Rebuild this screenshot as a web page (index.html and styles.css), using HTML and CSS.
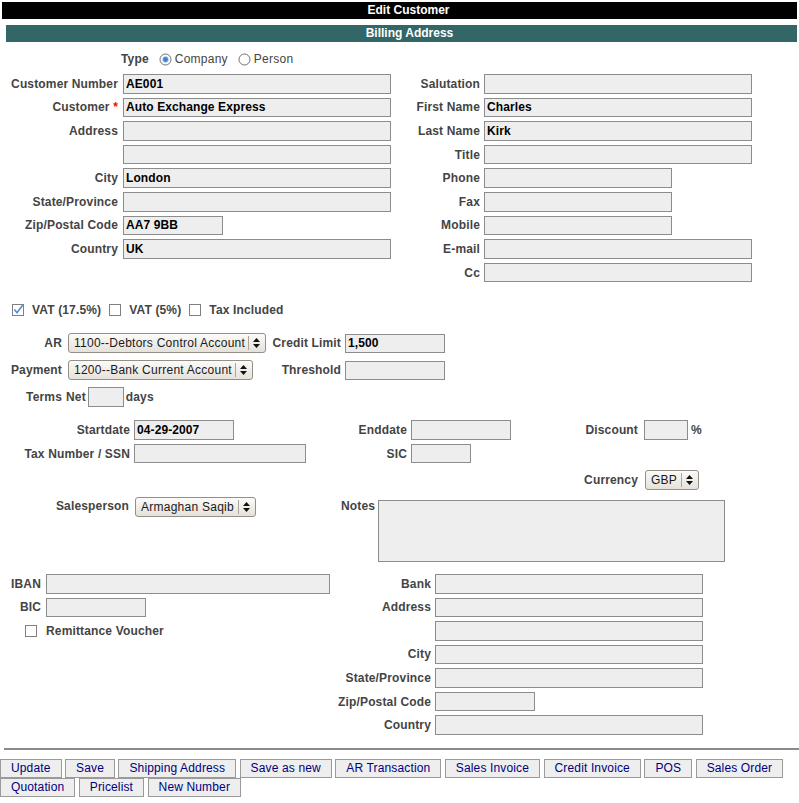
FILE: index.html
```html
<!DOCTYPE html>
<html lang="en">
<head>
<meta charset="utf-8">
<title>Edit Customer</title>
<link rel="stylesheet" href="styles.css">
</head>
<body>
<div class="title">Edit Customer</div>
<div class="band">Billing Address</div>

<div class="type-row">
  <span class="type-lbl">Type</span>
  <svg class="radio" viewBox="0 0 13 13"><circle cx="6.5" cy="6.5" r="5.5" fill="#fff" stroke="#6e6e6e"/><circle cx="6.5" cy="6.5" r="3.2" fill="#a9c9ef"/><circle cx="6.5" cy="6.5" r="2.4" fill="#3b82dc"/></svg>
  <span class="opt">Company</span>
  <svg class="radio" viewBox="0 0 13 13"><circle cx="6.5" cy="6.5" r="5.5" fill="#fff" stroke="#6e6e6e"/></svg>
  <span class="opt">Person</span>
</div>

<div class="address">
  <div class="grid g-left">
    <label class="lbl pr5">Customer Number</label><input class="in" value="AE001">
    <label class="lbl pr5">Customer <span class="req">*</span></label><input class="in" value="Auto Exchange Express">
    <label class="lbl pr5">Address</label><input class="in">
    <span></span><input class="in">
    <label class="lbl pr5">City</label><input class="in" value="London">
    <label class="lbl pr5">State/Province</label><input class="in">
    <label class="lbl pr5">Zip/Postal Code</label><input class="in w100" value="AA7 9BB">
    <label class="lbl pr5">Country</label><input class="in" value="UK">
  </div>
  <div class="grid g-right">
    <label class="lbl pr4">Salutation</label><input class="in">
    <label class="lbl pr4">First Name</label><input class="in" value="Charles">
    <label class="lbl pr4">Last Name</label><input class="in" value="Kirk">
    <label class="lbl pr4">Title</label><input class="in">
    <label class="lbl pr4">Phone</label><input class="in w188">
    <label class="lbl pr4">Fax</label><input class="in w188">
    <label class="lbl pr4">Mobile</label><input class="in w188">
    <label class="lbl pr4">E-mail</label><input class="in">
    <label class="lbl pr4">Cc</label><input class="in">
  </div>
</div>

<div class="vat-row">
  <svg class="cb" viewBox="0 0 12 12"><rect x="0.5" y="0.5" width="11" height="11" fill="#fff" stroke="#808080"/><path d="M2.4 5.6 L5 8.8 L10.6 1.2" fill="none" stroke="#4a8dd8" stroke-width="1.6"/></svg>
  <span class="cb-txt">VAT (17.5%)</span>
  <svg class="cb" viewBox="0 0 12 12"><rect x="0.5" y="0.5" width="11" height="11" fill="#fff" stroke="#808080"/></svg>
  <span class="cb-txt">VAT (5%)</span>
  <svg class="cb" viewBox="0 0 12 12"><rect x="0.5" y="0.5" width="11" height="11" fill="#fff" stroke="#808080"/></svg>
  <span class="cb-txt">Tax Included</span>
</div>

<div class="grid ar">
  <label class="lbl pr6">AR</label>
  <div class="cell"><div class="sel"><span class="sel-txt">1100--Debtors Control Account</span><span class="sel-sep"></span><svg class="sel-arr" viewBox="0 0 7 10"><path d="M3.5 0 L7 4 H0 Z M0 6 H7 L3.5 10 Z" fill="#111"/></svg></div></div>
  <label class="lbl pr4">Credit Limit</label><input class="in w100" value="1,500">

  <label class="lbl pr6">Payment</label>
  <div class="cell"><div class="sel"><span class="sel-txt">1200--Bank Current Account</span><span class="sel-sep"></span><svg class="sel-arr" viewBox="0 0 7 10"><path d="M3.5 0 L7 4 H0 Z M0 6 H7 L3.5 10 Z" fill="#111"/></svg></div></div>
  <label class="lbl pr4">Threshold</label><input class="in w100">

  <label class="lbl pr6">Terms</label>
  <div class="terms"><span>Net</span><input class="in w36"><span>days</span></div>
</div>

<div class="grid dates">
  <label class="lbl pr4">Startdate</label><input class="in w100" value="04-29-2007">
  <label class="lbl pr4">Enddate</label><input class="in w100">
  <label class="lbl pr6">Discount</label>
  <div class="disc"><input class="in w44"><span class="pct">%</span></div>

  <label class="lbl pr4">Tax Number / SSN</label><input class="in w172">
  <label class="lbl pr4">SIC</label><input class="in w60">

  <label class="lbl pr6 cur-lbl">Currency</label>
  <div class="cell cur-cell"><div class="sel sel-cur"><span class="sel-txt">GBP</span><span class="sel-sep"></span><svg class="sel-arr" viewBox="0 0 7 10"><path d="M3.5 0 L7 4 H0 Z M0 6 H7 L3.5 10 Z" fill="#111"/></svg></div></div>
</div>

<div class="sp-row">
  <div class="sp-left">
    <label class="sp-lbl">Salesperson</label>
    <div class="sel"><span class="sel-txt">Armaghan Saqib</span><span class="sel-sep"></span><svg class="sel-arr" viewBox="0 0 7 10"><path d="M3.5 0 L7 4 H0 Z M0 6 H7 L3.5 10 Z" fill="#111"/></svg></div>
  </div>
  <label class="notes-lbl">Notes</label>
  <textarea class="notes"></textarea>
</div>

<div class="bank">
  <div class="grid bank-left">
    <label class="lbl pr5">IBAN</label><input class="in">
    <label class="lbl pr5">BIC</label><input class="in w100">
    <div class="cb-cell"><svg class="cb" viewBox="0 0 12 12"><rect x="0.5" y="0.5" width="11" height="11" fill="#fff" stroke="#808080"/></svg></div>
    <span class="remit">Remittance Voucher</span>
  </div>
  <div class="grid bank-right">
    <label class="lbl pr4">Bank</label><input class="in">
    <label class="lbl pr4">Address</label><input class="in">
    <span></span><input class="in">
    <label class="lbl pr4">City</label><input class="in">
    <label class="lbl pr4">State/Province</label><input class="in">
    <label class="lbl pr4">Zip/Postal Code</label><input class="in w100">
    <label class="lbl pr4">Country</label><input class="in">
  </div>
</div>

<div class="rule"></div>

<div class="buttons">
  <button class="btn">Update</button>
  <button class="btn">Save</button>
  <button class="btn">Shipping Address</button>
  <button class="btn">Save as new</button>
  <button class="btn">AR Transaction</button>
  <button class="btn">Sales Invoice</button>
  <button class="btn">Credit Invoice</button>
  <button class="btn">POS</button>
  <button class="btn">Sales Order</button>
  <button class="btn">Quotation</button>
  <button class="btn">Pricelist</button>
  <button class="btn">New Number</button>
</div>
</body>
</html>
```

FILE: styles.css
```css
body {
  margin: 0;
  font: 12px "Liberation Sans", Arial, sans-serif;
  letter-spacing: 0.15px;
  color: #444;
  background: #fff;
}

.title {
  margin: 2px 2px 0 2px;
  height: 17px;
  line-height: 17px;
  background: #000;
  color: #fff;
  font-weight: bold;
  text-align: center;
  padding-left: 18px;
  letter-spacing: 0;
}

.band {
  margin: 6px 2px 0 6px;
  height: 17px;
  line-height: 17px;
  background: #336666;
  color: #fff;
  font-weight: bold;
  text-align: center;
  padding-left: 16px;
  letter-spacing: 0;
}

.type-row {
  display: flex;
  align-items: center;
  height: 20px;
  margin-top: 6px;
  padding-left: 121px;
  transform: translateY(1px);
}
.type-lbl { font-weight: bold; margin-right: 10px; }
.radio { width: 13px; height: 13px; flex: none; margin-right: 3px; }
.opt { margin-right: 10px; letter-spacing: 0.25px; }

.address { display: flex; margin-top: 4px; }

.grid {
  display: grid;
  grid-auto-rows: 23.6px;
  align-items: center;
}
.lbl {
  text-align: right;
  font-weight: bold;
  white-space: nowrap;
}
.pr4 { padding-right: 4px; }
.pr5 { padding-right: 5px; }
.pr6 { padding-right: 6px; }
.req { color: #f00; }

.in {
  display: block;
  box-sizing: border-box;
  width: 100%;
  height: 19.6px;
  margin: 0;
  padding: 0 2px;
  border: 1px solid #8c8c8c;
  border-radius: 0;
  background: #eee;
  font: bold 12px "Liberation Sans", Arial, sans-serif;
  letter-spacing: 0.1px;
  color: #000;
  outline: none;
}
.w36 { width: 36px; }
.w44 { width: 44px; }
.w60 { width: 60px; }
.w100 { width: 100px; }
.w172 { width: 172px; }
.w188 { width: 188px; }

.g-left { grid-template-columns: 123px 268px; }
.g-right { grid-template-columns: 93px 268px; }

.vat-row {
  display: flex;
  align-items: center;
  height: 22px;
  margin-top: 14.6px;
  padding-left: 12px;
  font-weight: bold;
}
.cb { width: 12px; height: 12px; flex: none; display: block; }
.vat-row .cb { margin-right: 8px; }
.cb-txt { margin-right: 8px; }

.ar {
  grid-template-columns: 68px 204px 73px 100px;
  grid-template-rows: 27px 27px 26px;
  margin-top: 9px;
}
.cell { display: flex; align-items: center; }

.sel {
  display: inline-flex;
  align-items: center;
  box-sizing: border-box;
  height: 20px;
  padding: 0 5px;
  border: 1px solid #948f87;
  border-radius: 3px;
  background: linear-gradient(#fcfbf9, #e5e1da);
  color: #1a1a1a;
  font: 12px "Liberation Sans", Arial, sans-serif;
  letter-spacing: 0.25px;
  white-space: nowrap;
}
.sel-txt { padding-right: 3px; }
.sel-sep {
  width: 1px;
  height: 14px;
  background: #aaa59d;
  margin-right: 4px;
}
.sel-arr { width: 7px; height: 10px; display: block; }
.sel-cur { margin-left: 1px; }
.sel-cur .sel-txt { padding-right: 4px; }
.sp-left .sel-txt { padding-right: 4px; }

.terms {
  display: flex;
  align-items: center;
  margin-left: -2px;
  font-weight: bold;
}
.terms .in { margin: 0 2px; }

.dates {
  grid-template-columns: 134px 206px 71px 169px 64px auto;
  grid-template-rows: 23.6px 23.6px 29px;
  margin-top: 8.2px;
}
.disc { display: flex; align-items: center; }
.pct { font-weight: bold; margin-left: 3px; }
.cur-lbl { grid-column: 5; grid-row: 3; }
.cur-cell { grid-column: 6; grid-row: 3; }

.sp-row {
  display: flex;
  align-items: flex-start;
  margin-top: 2.6px;
}
.sp-left {
  display: flex;
  align-items: flex-start;
  width: 341px;
}
.sp-lbl {
  box-sizing: border-box;
  width: 135px;
  padding-right: 6px;
  margin-top: 2px;
  line-height: 14px;
  text-align: right;
  font-weight: bold;
}
.notes-lbl {
  width: 37px;
  flex: none;
  margin-top: 2px;
  line-height: 14px;
  font-weight: bold;
}
.notes {
  display: block;
  box-sizing: border-box;
  width: 347px;
  height: 62px;
  margin: 3px 0 0 0;
  padding: 2px;
  border: 1px solid #8c8c8c;
  border-radius: 0;
  background: #eee;
  resize: none;
  outline: none;
  font: bold 12px "Liberation Sans", Arial, sans-serif;
}

.bank { display: flex; margin-top: 10px; }
.bank-left { grid-template-columns: 46px 284px; align-content: start; }
.bank-right { grid-template-columns: 105px 268px; }
.cb-cell { display: flex; justify-content: flex-end; padding-right: 9px; }
.remit { font-weight: bold; }

.rule {
  height: 2px;
  background: #8a8a8a;
  margin: 10.8px 0 0 4px;
}

.buttons {
  display: flex;
  flex-wrap: wrap;
  column-gap: 3.5px;
  row-gap: 0;
  margin-top: 9px;
}
.btn {
  box-sizing: border-box;
  height: 19px;
  margin: 0;
  padding: 0 10px;
  border: 1px solid #9a9a9a;
  border-radius: 0;
  background: #eee;
  color: #000080;
  font: 12px "Liberation Sans", Arial, sans-serif;
  letter-spacing: 0.14px;
  line-height: 17px;
}
```
